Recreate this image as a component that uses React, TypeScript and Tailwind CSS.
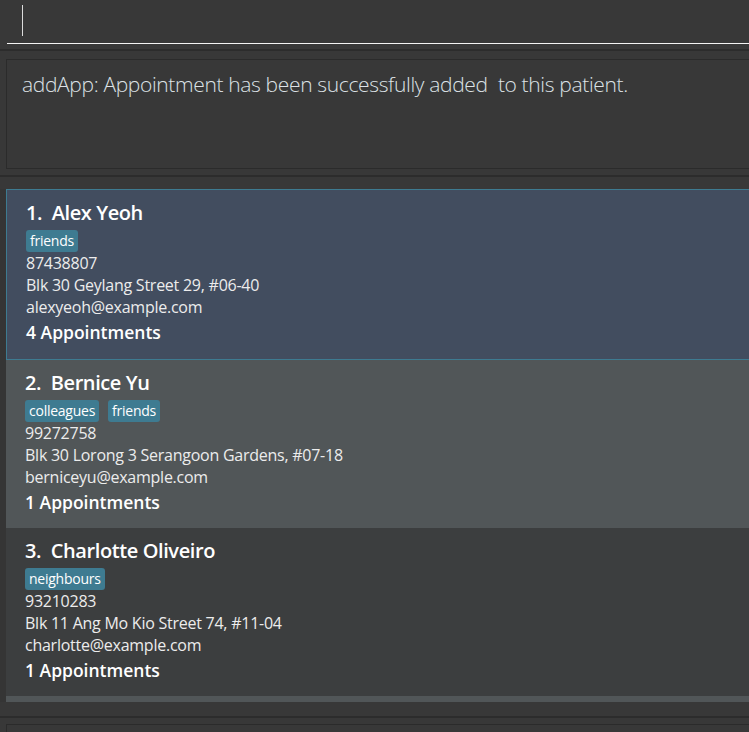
import clsx from "clsx";

type Person = {
  name: string;
  tags: string[];
  phone: string;
  address: string;
  email: string;
  appointments: number;
};

const people: Person[] = [
  {
    name: "Alex Yeoh",
    tags: ["friends"],
    phone: "87438807",
    address: "Blk 30 Geylang Street 29, #06-40",
    email: "alexyeoh@example.com",
    appointments: 4,
  },
  {
    name: "Bernice Yu",
    tags: ["colleagues", "friends"],
    phone: "99272758",
    address: "Blk 30 Lorong 3 Serangoon Gardens, #07-18",
    email: "berniceyu@example.com",
    appointments: 1,
  },
  {
    name: "Charlotte Oliveiro",
    tags: ["neighbours"],
    phone: "93210283",
    address: "Blk 11 Ang Mo Kio Street 74, #11-04",
    email: "charlotte@example.com",
    appointments: 1,
  },
];

const font = { fontFamily: '"Open Sans", "Noto Sans", sans-serif' };

function PersonCard({ person, index }: { person: Person; index: number }) {
  const selected = index === 0;
  return (
    <div
      className={clsx(
        "px-[19px] pt-[9px]",
        selected && "h-[171px] border border-[#3e7b91] bg-[#424d5f]",
        !selected && index % 2 === 1 && "h-[168px] bg-[#515658]",
        !selected && index % 2 === 0 && "h-[168px] bg-[#3c3e3f]",
      )}
    >
      <div className="text-[20px] font-semibold leading-[28px] tracking-[-0.4px] text-white">
        {index + 1}.&nbsp; {person.name}
      </div>
      <div className="mt-[3px] flex gap-[9px]">
        {person.tags.map((tag) => (
          <span
            key={tag}
            className="h-[22px] rounded-[3px] bg-[#3e7b91] px-[4px] text-[14px] leading-[22px] tracking-[-0.25px] text-white"
          >
            {tag}
          </span>
        ))}
      </div>
      <div className="text-[16px] leading-[22px] tracking-[-0.25px] text-[#ececec]">
        <div>{person.phone}</div>
        <div>{person.address}</div>
        <div>{person.email}</div>
      </div>
      <div className="mt-[3px] text-[17.5px] font-semibold leading-[23px] text-white">
        {person.appointments} Appointments
      </div>
    </div>
  );
}

export default function App() {
  return (
    <div className="h-[732px] w-[749px] overflow-hidden bg-[#383838]" style={font}>
      <div className="w-[780px]">
        {/* command box */}
        <div className="h-[49px] pl-[7px] pt-[5px]">
          <div className="h-[39px] border-b border-[#f4f4f4] pl-[15px]">
            <div className="h-[31px] w-px bg-[#dcdcdc]" />
          </div>
        </div>
        <div className="h-[2px] bg-[#2c2c2c]" />

        {/* result display */}
        <div className="pl-[6px] pt-[8px]">
          <div className="h-[110px] border border-[#2b2b2b] pl-[15px] pt-[10px]">
            <p className="text-[21px] font-light leading-[28px] tracking-[-0.35px] text-[#dde2e6]">
              addApp: Appointment has been successfully added&nbsp; to this patient.
            </p>
          </div>
        </div>
        <div className="h-[6px]" />
        <div className="h-[2px] bg-[#2c2c2c]" />
        <div className="h-[12px]" />

        {/* person list */}
        <div className="bg-[#353535] pl-[6px]">
          {people.map((person, index) => (
            <PersonCard key={person.name} person={person} index={index} />
          ))}
          <div className="h-[6px] bg-[#515658]" />
        </div>

        {/* status bar */}
        <div className="h-[14px]" />
        <div className="h-[2px] bg-[#2c2c2c]" />
        <div className="pl-[6px] pt-[6px]">
          <div className="h-[40px] border border-[#2b2b2b]" />
        </div>
      </div>
    </div>
  );
}
